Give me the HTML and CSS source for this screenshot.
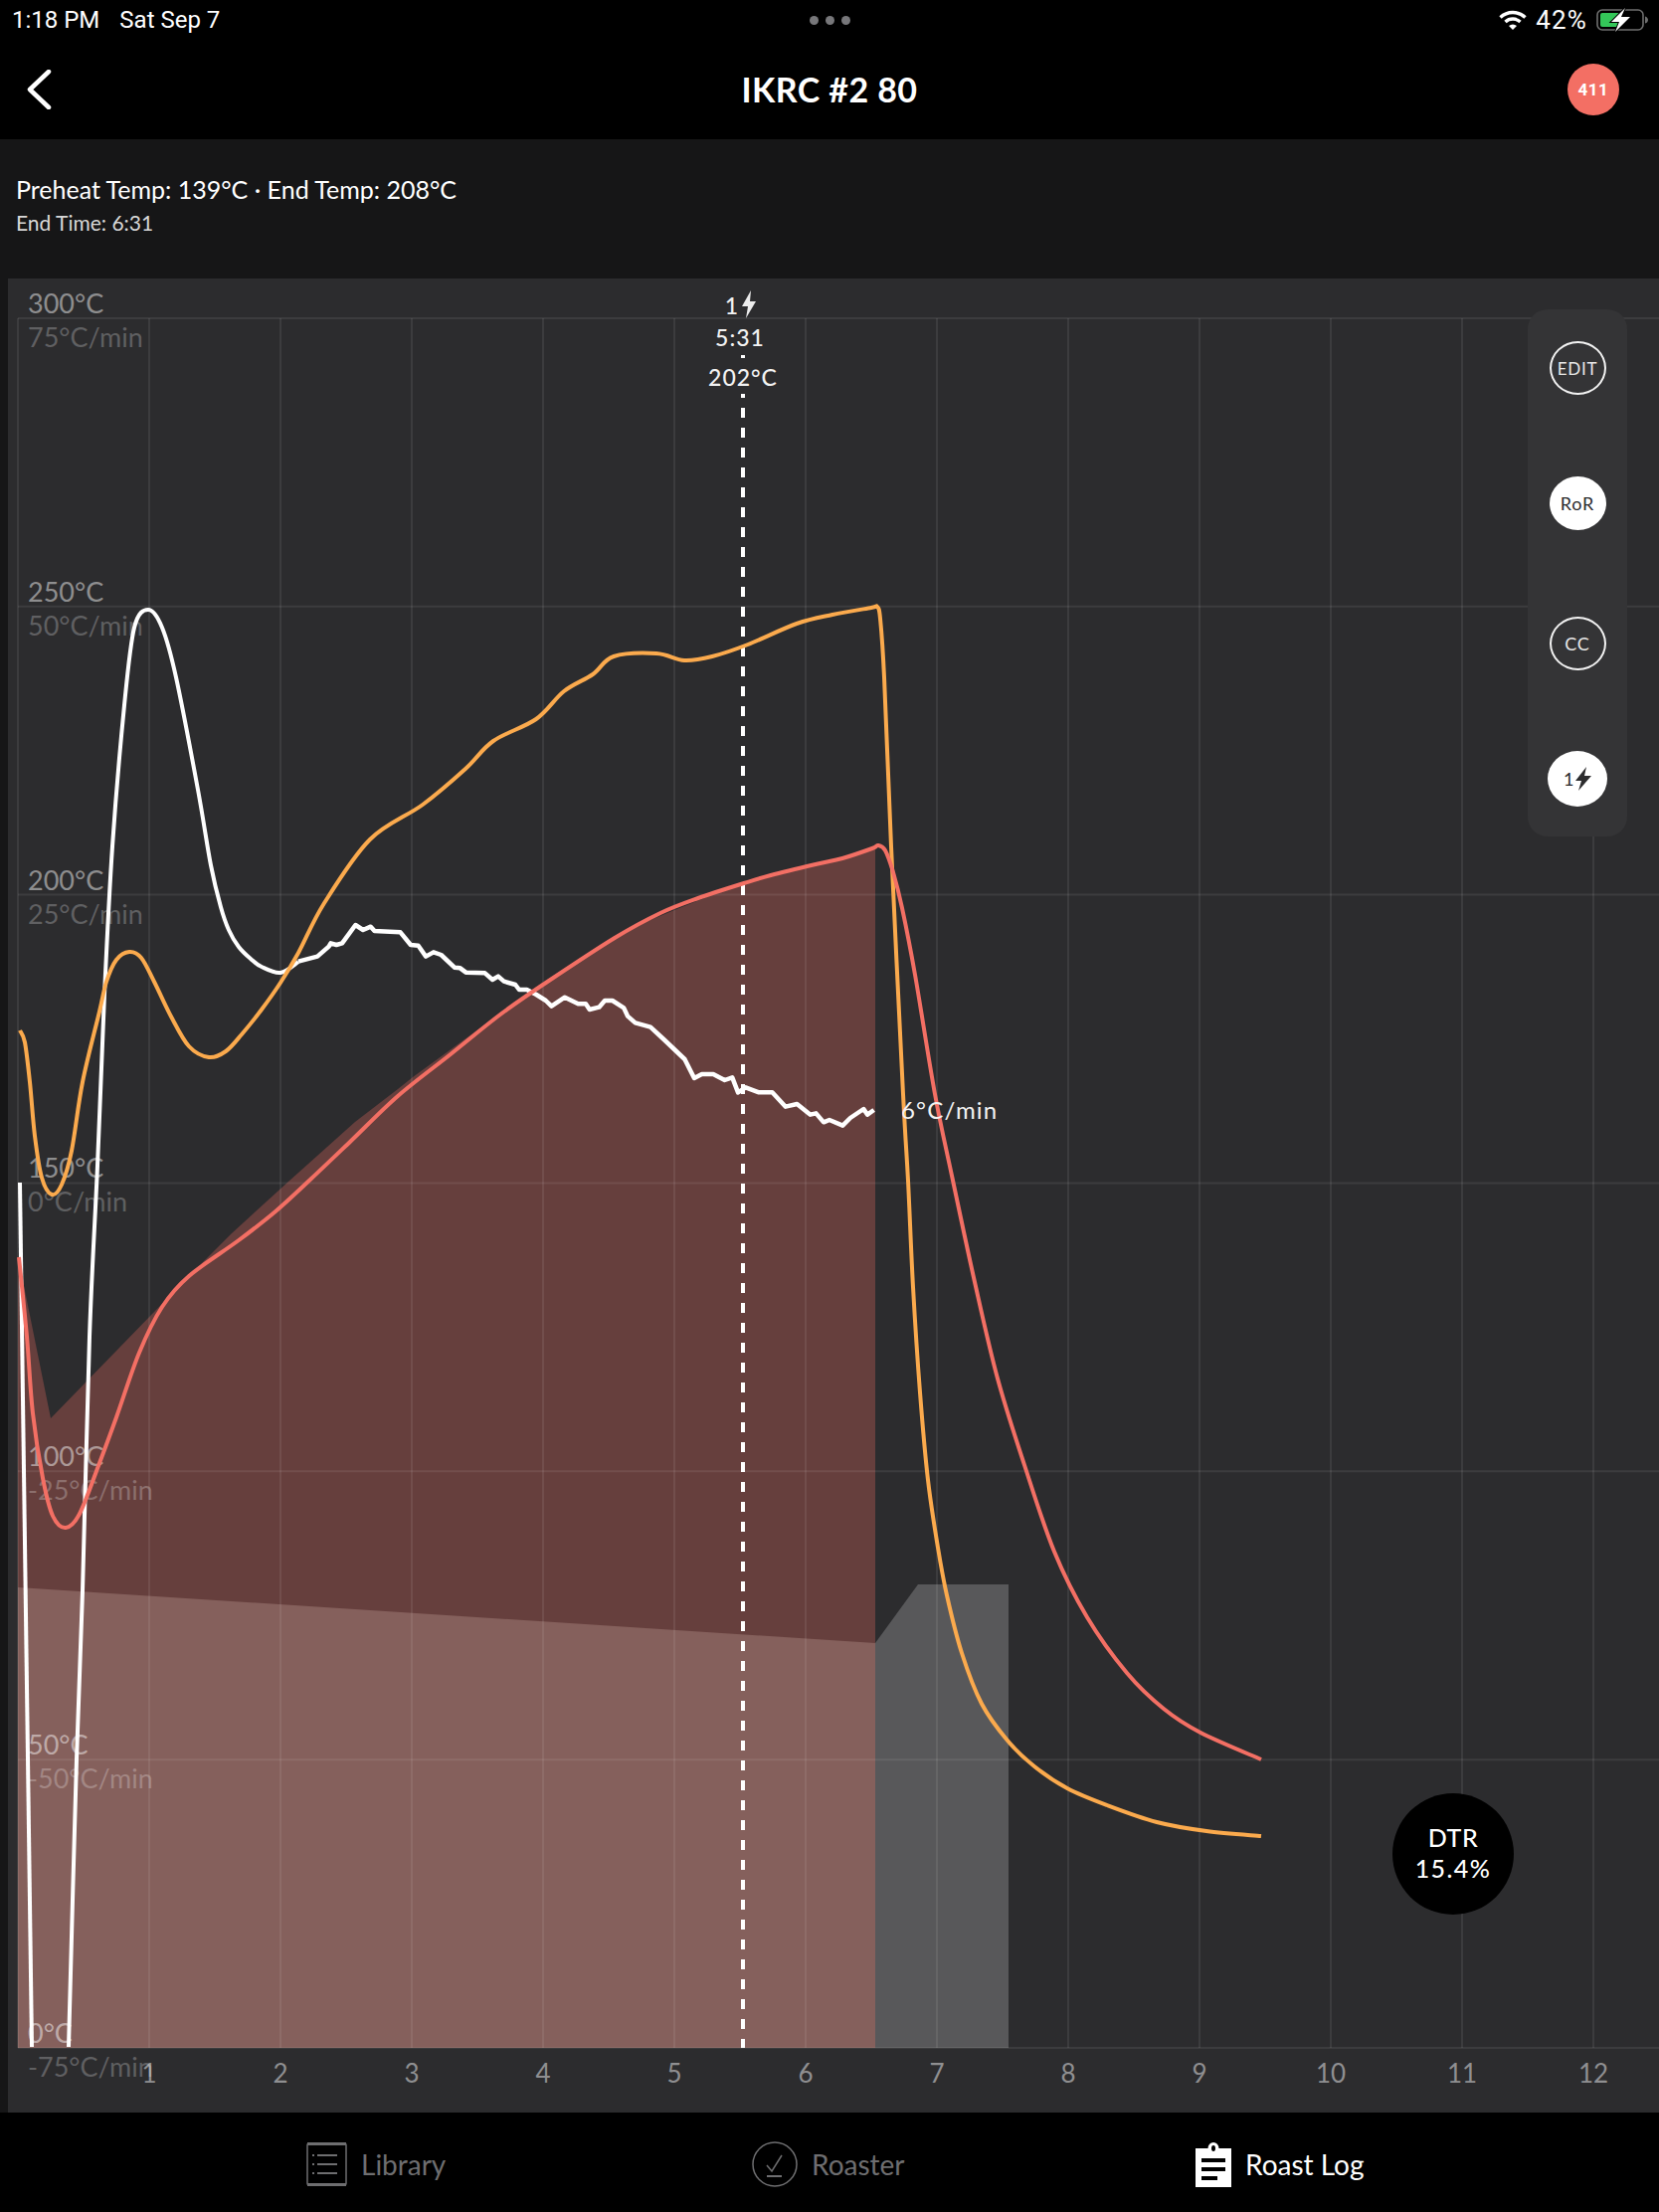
FILE: index.html
```html
<!DOCTYPE html>
<html lang="en">
<head>
    <meta charset="UTF-8">
    <meta name="viewport" content="width=device-width, initial-scale=1.0">
    <title>IKRC #2 80</title>

    <link rel="stylesheet" href="styles.css">
</head>
<body>
    <div class="page">
        <header class="top-bar">
            <div class="status-bar">
                <div class="status-left">
                    <span>1:18 PM</span>
                    <span>Sat Sep 7</span>
                </div>
                <div class="status-dots"><i></i><i></i><i></i></div>
                <div class="status-right">
                    <svg class="wifi-icon" viewBox="0 0 28 20">
                        <path d="M1.5 7.5a18 18 0 0 1 25 0" fill="none" stroke="#fff" stroke-width="3.4"/>
                        <path d="M6.5 12a11 11 0 0 1 15 0" fill="none" stroke="#fff" stroke-width="3.4"/>
                        <path d="M10 16a6 6 0 0 1 8 0l-4 4z" fill="#fff"/>
                    </svg>
                    <span class="battery-text">42%</span>
                    <svg class="battery-icon" viewBox="0 0 52 24">
                        <rect x="1" y="2" width="46" height="20" rx="5" fill="none" stroke="#6f6f6f" stroke-width="1.6"/>
                        <path d="M49 8.5c2 .5 3 2 3 3.500s-1 3-3 3.500z" fill="#6f6f6f"/>
                        <rect x="4" y="5" width="20" height="14" rx="2" fill="#34c759"/>
                        <path d="M29 0 15 14h8l-4 10 15-15h-9z" fill="#000" stroke="#000" stroke-width="2"/>
                        <path d="M29 0 15 14h8l-4 10 15-15h-9z" fill="#fff"/>
                    </svg>
                </div>
            </div>
            <nav class="nav-bar">
                <svg class="back-icon" viewBox="0 0 26 40">
                    <path d="M23 2 4 20l19 18" fill="none" stroke="#fff" stroke-width="4.500" stroke-linecap="round" stroke-linejoin="round"/>
                </svg>
                <h1 class="nav-title">IKRC #2 80</h1>
                <span class="nav-badge">411</span>
            </nav>
        </header>

        <section class="info-panel">
            <p class="info-main">Preheat Temp: 139°C · End Temp: 208°C</p>
            <p class="info-sub">End Time: 6:31</p>
        </section>

        <main class="chart">
            <svg id="chartSvg" class="chart-svg" viewBox="8 280 1660 1844"></svg>

            <div class="chart-tools">
                <span class="tool tool-outline tool-small">EDIT</span>
                <span class="tool tool-solid">RoR</span>
                <span class="tool tool-outline tool-cc">CC</span>
                <span class="tool tool-solid tool-bolt">
                    1<svg viewBox="0 0 16 24"><path d="M11 0 0 14h6l-3 10 13-15H9z" fill="#2c2c2e"/></svg>
                </span>
            </div>

            <div class="dtr-badge">
                <span>DTR</span>
                <span class="dtr-value">15.4%</span>
            </div>
        </main>

        <footer class="tab-bar">
            <div class="tab">
                <svg class="tab-icon-library" viewBox="0 0 41 44">
                    <rect x="1" y="1" width="39" height="42" rx="2" fill="none" stroke="#6e6e70" stroke-width="1.500"/>
                    <path d="M1 1.500h39M1 42.500h39" stroke="#6e6e70" stroke-width="3"/>
                    <path d="M11 13h20M11 22h20M11 31h20" stroke="#6e6e70" stroke-width="2"/>
                    <path d="M6 13h2M6 22h2M6 31h2" stroke="#6e6e70" stroke-width="2"/>
                </svg>
                <span>Library</span>
            </div>
            <div class="tab">
                <svg class="tab-icon-roaster" viewBox="0 0 46 46">
                    <circle cx="23" cy="23" r="22" fill="none" stroke="#6e6e70" stroke-width="1.500"/>
                    <path d="M15 24l5 6 10-16" fill="none" stroke="#6e6e70" stroke-width="1.500"/>
                    <path d="M15 35h15" stroke="#6e6e70" stroke-width="2"/>
                </svg>
                <span>Roaster</span>
            </div>
            <div class="tab tab-active">
                <svg class="tab-icon-log" viewBox="0 0 36 46">
                    <path d="M0 7h12.500a5.500 6 0 0 1 11 0H36v39H0z" fill="#fff"/>
                    <ellipse cx="18" cy="7" rx="2" ry="3" fill="#000"/>
                    <path d="M6 19h24M6 28h24M6 37h16" stroke="#000" stroke-width="4"/>
                </svg>
                <span>Roast Log</span>
            </div>
        </footer>
    </div>

    <script src="script.js"></script>
</body>
</html>
```

FILE: styles.css
```css
:root {
    --black: #000;
    --panel: #161617;
    --chart: #2c2c2e;
    --tools: #343436;
    --grey: #6e6e70;
    --red: #f36f64;
    --orange: #fbaa4d;
}

* {
    margin: 0;
    padding: 0;
    box-sizing: border-box;
}

body {
    background-color: var(--black);
    color: #fff;
    font-family: 'Lato', sans-serif;
}

.page {
    display: flex;
    flex-direction: column;
    width: 1668px;
    height: 2224px;
    overflow: hidden;
    background-color: var(--panel);
}

.top-bar {
    height: 140px;
    background-color: var(--black);
}

.status-bar {
    display: grid;
    grid-template-columns: 1fr auto 1fr;
    align-items: center;
    height: 40px;
    padding: 0 11px 0 12px;
    font-family: 'Roboto', sans-serif;
    font-size: 24px;
}

.status-left {
    display: flex;
    gap: 20px;
}

.status-dots {
    display: flex;
    gap: 7px;
}

.status-dots i {
    width: 9px;
    height: 9px;
    border-radius: 50%;
    background-color: #77777a;
}

.status-right {
    display: flex;
    justify-content: flex-end;
    align-items: center;
    gap: 9px;
}

.battery-text {
    font-size: 26px;
    letter-spacing: 1.2px;
}

.wifi-icon {
    width: 28px;
    height: 20px;
}

.battery-icon {
    width: 52px;
    height: 24px;
}

.nav-bar {
    display: flex;
    justify-content: space-between;
    align-items: center;
    position: relative;
    height: 100px;
    padding: 0 40px 0 26px;
}

.back-icon {
    width: 26px;
    height: 40px;
}

.nav-title {
    position: absolute;
    left: 0;
    right: 0;
    margin-top: -2px;
    text-align: center;
    font-size: 34px;
    font-weight: 700;
    letter-spacing: 0.4px;
}

.nav-badge {
    display: flex;
    justify-content: center;
    align-items: center;
    width: 52px;
    height: 52px;
    border-radius: 50%;
    background-color: var(--red);
    font-family: 'Roboto', sans-serif;
    font-size: 17px;
    font-weight: 700;
    letter-spacing: 0.5px;
}

.info-panel {
    height: 140px;
    padding: 32px 16px 0;
}

.info-main {
    font-size: 25px;
    line-height: 36px;
}

.info-sub {
    margin-top: 3px;
    font-size: 21px;
    line-height: 26px;
    color: #d8d8d8;
}

.chart {
    position: relative;
    flex: 1;
    margin-left: 8px;
    background-color: var(--chart);
}

.chart-svg {
    display: block;
    width: 1660px;
    height: 1844px;
}

.grid-line {
    stroke: rgba(255, 255, 255, 0.08);
    stroke-width: 2;
}

.temp-label,
.rate-label,
.minute-label,
.marker-label,
.ror-label {
    font-family: 'Lato', sans-serif;
}

.temp-label {
    font-size: 27px;
    fill: rgba(255, 255, 255, 0.48);
}

.rate-label {
    font-size: 27px;
    fill: rgba(255, 255, 255, 0.25);
}

.minute-label {
    font-size: 26px;
    fill: #8f8f91;
    text-anchor: middle;
}

.marker-label {
    font-size: 23px;
    font-weight: 500;
    letter-spacing: 1px;
    fill: #f2f2f2;
    text-anchor: middle;
}

.ror-label {
    font-size: 24px;
    letter-spacing: 1.2px;
    fill: #f2f2f2;
}

.fill-dark {
    fill: #663f3d;
}

.fill-light {
    fill: #85605c;
}

.fill-grey {
    fill: #58585a;
}

.curve {
    fill: none;
    stroke-width: 4;
    stroke-linejoin: round;
}

.curve-red {
    stroke: var(--red);
}

.curve-orange {
    stroke: var(--orange);
}

.curve-white {
    stroke: #fff;
}

.curve-noise {
    stroke-width: 4.5;
}

.marker-line {
    stroke: #fff;
    stroke-width: 4;
    stroke-dasharray: 10 10;
}

.chart-tools {
    position: absolute;
    top: 31px;
    left: 1528px;
    display: flex;
    flex-direction: column;
    align-items: center;
    gap: 81px;
    width: 100px;
    height: 530px;
    padding-top: 32px;
    border-radius: 20px;
    background-color: var(--tools);
}

.tool {
    display: flex;
    justify-content: center;
    align-items: center;
    width: 57px;
    height: 54px;
    border-radius: 50%;
    font-size: 18px;
    letter-spacing: 0.8px;
}

.tool-small {
    margin-bottom: 1px;
    font-size: 17px;
}

.tool-cc {
    margin-top: 6px;
}

.tool-outline {
    border: 2px solid #f2f2f2;
    color: #e8e8e8;
}

.tool-solid {
    background-color: #fff;
    color: #2c2c2e;
}

.tool-bolt {
    width: 60px;
    height: 56px;
}

.tool-bolt svg {
    width: 16px;
    height: 24px;
    margin-left: 1px;
}

.dtr-badge {
    position: absolute;
    top: 1523px;
    left: 1392px;
    display: flex;
    flex-direction: column;
    justify-content: center;
    align-items: center;
    width: 122px;
    height: 122px;
    padding-bottom: 3px;
    border-radius: 50%;
    background-color: var(--black);
    font-size: 25px;
    font-weight: 500;
    line-height: 31px;
    letter-spacing: 0.5px;
}

.dtr-value {
    letter-spacing: 1.4px;
}

.tab-bar {
    display: grid;
    grid-template-columns: 448px 446px auto;
    align-items: center;
    height: 100px;
    padding: 4px 0 0 308px;
    background-color: var(--black);
    font-size: 28px;
    color: var(--grey);
}

.tab {
    display: flex;
    align-items: center;
    gap: 14px;
}

.tab-active {
    color: #fff;
}

.tab-icon-library {
    width: 41px;
    height: 44px;
}

.tab-icon-roaster {
    width: 46px;
    height: 46px;
}

.tab-icon-log {
    width: 36px;
    height: 46px;
}
```

FILE: script.js
```js
var NS = 'http://www.w3.org/2000/svg';
var svg = document.getElementById('chartSvg');

var LEFT = 18;
var RIGHT = 1668;
var TOP = 320;
var BOTTOM = 2059;
var MINUTE = 132;
var DEGREE = 5.797;

// Curves are in page pixels, read off the roast log
var beanTemp = [
    [19, 1264], [27, 1344], [33, 1421], [43, 1486], [53, 1524], [66, 1536], [80, 1522],
    [100, 1471], [117, 1425], [140, 1360], [163, 1314], [190, 1283], [240, 1247], [277, 1218],
    [313, 1185], [353, 1147], [400, 1102], [453, 1060], [503, 1020], [549, 988], [618, 943],
    [664, 918], [702, 903], [748, 888], [775, 880], [820, 869], [847, 863], [877, 853],
    [883, 850], [890, 855], [898, 877], [907, 913], [920, 980], [940, 1100], [957, 1182],
    [980, 1289], [1003, 1386], [1030, 1473], [1060, 1560], [1093, 1626], [1133, 1682],
    [1170, 1718], [1207, 1742], [1268, 1769]
];

var heater = [
    [20, 1036], [25, 1048], [30, 1088], [35, 1142], [42, 1184], [52, 1201], [62, 1191],
    [72, 1157], [83, 1088], [100, 1017], [107, 987], [117, 965], [130, 957], [142, 963],
    [155, 987], [172, 1022], [190, 1052], [210, 1063], [227, 1057], [243, 1040], [263, 1015],
    [282, 988], [300, 958], [326, 908], [372, 844], [425, 809], [468, 773], [496, 745],
    [539, 723], [567, 695], [596, 678], [617, 660], [660, 657], [688, 664], [716, 660],
    [752, 648], [801, 627], [837, 618], [876, 611], [882, 610], [885, 622], [889, 681],
    [896, 851], [908, 1100], [913, 1187], [918, 1294], [925, 1400], [933, 1488], [943, 1556],
    [952, 1604], [967, 1662], [987, 1713], [1013, 1750], [1040, 1776], [1073, 1798],
    [1113, 1815], [1163, 1832], [1213, 1841], [1268, 1846]
];

var rorRise = [
    [69, 2058], [77, 1769], [83, 1600], [90, 1344], [98, 1172], [105, 1000], [113, 851],
    [125, 709], [135, 631], [149, 613], [163, 631], [177, 681], [199, 794], [212, 870],
    [222, 912], [230, 935], [240, 952], [252, 964], [263, 972], [282, 978], [300, 967]
];

// The noisy part of the rate of rise, one step per sample
var rorNoise = [
    [0, 260], [50, 245], [80, 215], [85, 205], [100, 210], [115, 205], [150, 150], [170, 165],
    [190, 155], [200, 168], [240, 170], [268, 172], [295, 210], [315, 212], [335, 245],
    [355, 232], [375, 240], [410, 278], [425, 280], [440, 293], [490, 295], [510, 315],
    [525, 305], [540, 320], [570, 330], [580, 345], [600, 345], [625, 360], [650, 378],
    [665, 395], [700, 368], [735, 388], [755, 388], [765, 405], [790, 398], [805, 378],
    [825, 378], [855, 400], [865, 425], [885, 445], [925, 458], [960, 495], [1015, 555],
    [1040, 612], [1060, 600], [1090, 600], [1120, 618], [1140, 610], [1155, 655], [1175, 640],
    [1210, 655], [1245, 655], [1280, 698], [1310, 690], [1345, 722], [1360, 718], [1380, 745],
    [1395, 738], [1430, 755], [1450, 732], [1485, 705], [1495, 722], [1512, 708]
].map(function(p) {
    return [300 + p[0] / 2.613, 880 + p[1] / 3];
});

var developed = [
    [18, 1263], [51, 1426], [190, 1283], [233, 1240], [290, 1188], [357, 1128], [400, 1095],
    [415, 1083], [545, 988], [625, 937], [683, 913], [736, 892], [820, 869], [880, 853],
    [880, BOTTOM], [18, BOTTOM]
];

function add(tag, attrs, text) {
    var el = document.createElementNS(NS, tag);
    for (var key in attrs) {
        el.setAttribute(key, attrs[key]);
    }
    if (text) {
        el.textContent = text;
    }
    svg.appendChild(el);
    return el;
}

function smoothPath(pts) {
    var d = 'M' + pts[0];
    for (var i = 0; i < pts.length - 1; i++) {
        var p0 = pts[i - 1] || pts[i];
        var p1 = pts[i];
        var p2 = pts[i + 1];
        var p3 = pts[i + 2] || p2;
        var c1 = [p1[0] + (p2[0] - p0[0]) / 6, p1[1] + (p2[1] - p0[1]) / 6];
        var c2 = [p2[0] - (p3[0] - p1[0]) / 6, p2[1] - (p3[1] - p1[1]) / 6];
        d += 'C' + c1 + ' ' + c2 + ' ' + p2;
    }
    return d;
}

function drawFills() {
    add('polygon', { 'class': 'fill-dark', points: developed.join(' ') });
    add('polygon', { 'class': 'fill-light', points: '18,1596 880,1652 880,2059 18,2059' });
    add('polygon', { 'class': 'fill-grey', points: '880,1652 923,1593 1014,1593 1014,2059 880,2059' });
}

function drawGrid() {
    for (var i = 0; i <= 12; i++) {
        var x = LEFT + i * MINUTE;
        add('line', { 'class': 'grid-line', x1: x, x2: x, y1: TOP, y2: BOTTOM });
        if (i > 0) {
            add('text', { 'class': 'minute-label', x: x, y: 2094 }, String(i));
        }
    }
    for (var t = 0; t <= 300; t += 50) {
        var y = BOTTOM - t * DEGREE;
        add('line', { 'class': 'grid-line', x1: LEFT, x2: RIGHT, y1: y, y2: y });
        add('text', { 'class': 'temp-label', x: 28, y: y - 5 }, t + '°C');
        add('text', { 'class': 'rate-label', x: 28, y: y + 29 }, (t / 2 - 75) + '°C/min');
    }
}

function drawMarker() {
    add('line', { 'class': 'marker-line', x1: 747, x2: 747, y1: 330, y2: BOTTOM });
    add('rect', { x: 708, y: 322, width: 78, height: 35, fill: '#2c2c2e' });
    add('rect', { x: 708, y: 361, width: 78, height: 35, fill: '#2c2c2e' });
    add('text', { 'class': 'marker-label', x: 736, y: 316 }, '1');
    add('path', { d: 'M755 292 746 308h6l-2 12 10-17h-6z', fill: '#ececec' });
    add('text', { 'class': 'marker-label', x: 744, y: 348 }, '5:31');
    add('text', { 'class': 'marker-label', x: 747, y: 388 }, '202°C');
}

function drawCurves() {
    add('path', { 'class': 'curve curve-white', d: 'M20 1189 32 2058' });
    add('path', { 'class': 'curve curve-white', d: smoothPath(rorRise) });
    add('polyline', { 'class': 'curve curve-white curve-noise', points: rorNoise.join(' ') });
    add('path', { 'class': 'curve curve-orange', d: smoothPath(heater) });
    add('path', { 'class': 'curve curve-red', d: smoothPath(beanTemp) });
    add('text', { 'class': 'ror-label', x: 906, y: 1125 }, '6°C/min');
}

drawFills();
drawGrid();
drawMarker();
drawCurves();
```
